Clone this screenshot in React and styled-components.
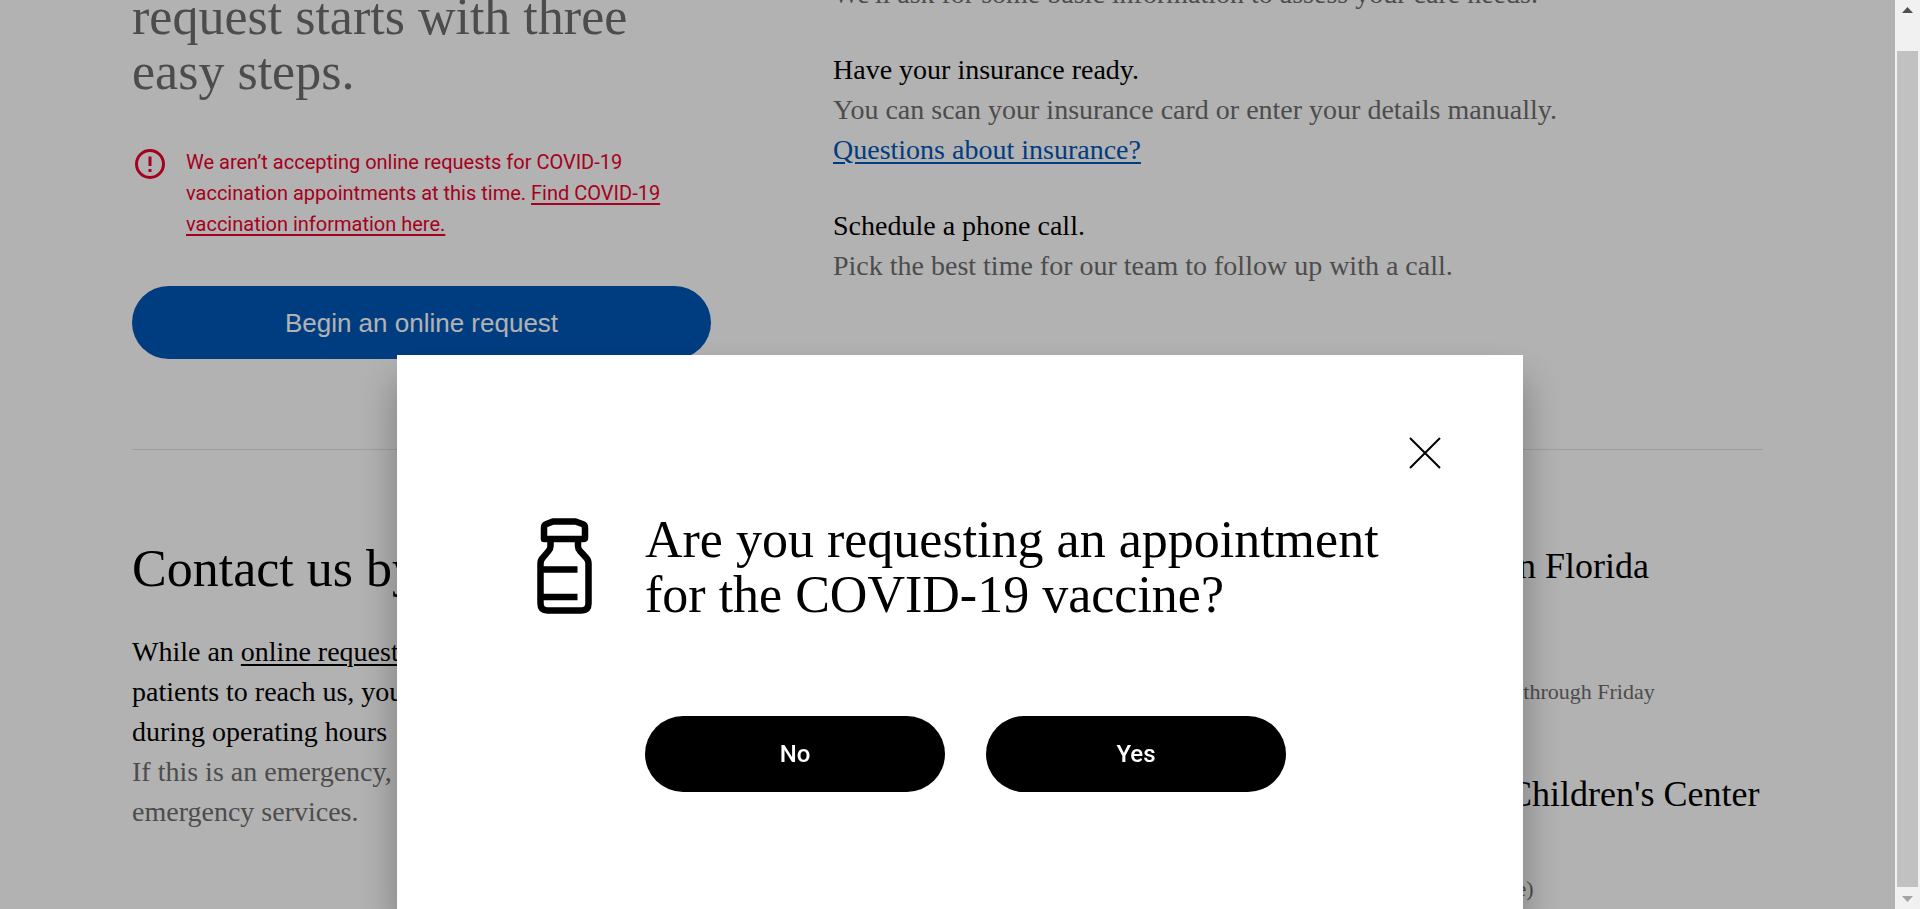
import React from "react";
import styled, { createGlobalStyle } from "styled-components";

const GlobalStyle = createGlobalStyle`
  *, *::before, *::after { box-sizing: border-box; }
  body {
    margin: 0;
    background: #fff;
    color: #000;
    font-family: "Liberation Serif", "Times New Roman", serif;
    font-size: 28px;
    line-height: 40px;
    overflow: hidden;
  }
  h1, h2, h3, p { margin: 0; font-weight: 400; }
  button { font: inherit; border: 0; cursor: pointer; }
`;

const Viewport = styled.div`
  display: flex;
  height: 100vh;
  overflow: hidden;
`;

const Page = styled.main`
  flex: 1;
  min-width: 0;
  margin-top: -66px;
  padding: 0 132px;
`;

const Section = styled.section`
  display: grid;
  grid-template-columns: 579px minmax(0, 1fr);
  column-gap: 122px;
`;

const Intro = styled(Section)`
  padding-bottom: 90px;
  border-bottom: 1px solid #e3e3e3;
`;

const Contact = styled(Section)`
  padding-top: 91px;
`;

const Heading = styled.h2`
  font-size: 52px;
  line-height: 55px;
  color: ${(p) => (p.$muted ? "#6e6e6e" : "#000")};
`;

const Alert = styled.div`
  display: flex;
  gap: 18px;
  margin: 48px 0 46px;
  color: #f0002c;
  font-family: Roboto, "Liberation Sans", sans-serif;
  font-size: 20px;
  line-height: 31px;

  svg { flex: none; }
`;

const TextLink = styled.a`
  color: ${(p) => p.$color || "inherit"};
  text-decoration: underline;
  text-decoration-thickness: 2px;
  text-underline-offset: 3px;
`;

const BeginButton = styled.button`
  width: 100%;
  height: 73px;
  border-radius: 37px;
  background: #0057b8;
  color: #fff;
  font-family: "Liberation Sans", Arial, sans-serif;
  font-size: 26px;
`;

const Steps = styled.div`
  display: flex;
  flex-direction: column;
  gap: 36px;
`;

const Muted = styled.p`
  color: #6e6e6e;
`;

const ContactCopy = styled.div`
  margin-top: 36px;
  white-space: nowrap;
`;

const Locations = styled.div`
  display: grid;
  grid-template-columns: 1fr 1fr;
  gap: 62px 40px;
`;

const LocationName = styled.h3`
  margin-bottom: 23px;
  font-size: 36px;
  line-height: 50px;
  white-space: nowrap;
`;

const LocationDetail = styled(Muted)`
  font-size: 22px;
  line-height: 31px;
`;

const ScrollBar = styled.div`
  position: relative;
  z-index: 2;
  flex: none;
  width: 25px;
  display: flex;
  flex-direction: column;
  align-items: center;
  background: #f1f1f1;
`;

const ScrollArrow = styled.svg`
  flex: none;
  width: 25px;
  height: 22px;
`;

const ScrollThumb = styled.div`
  flex: 1;
  width: 21px;
  margin-top: 29px;
  background: #c1c1c1;
`;

const Overlay = styled.div`
  position: fixed;
  inset: 0;
  z-index: 1;
  display: flex;
  justify-content: center;
  padding-top: 355px;
  overflow: hidden;
  background: rgba(0, 0, 0, 0.3);
`;

const Dialog = styled.div`
  width: 1126px;
  max-width: 100%;
  padding: 74px 74px 0;
  display: flex;
  flex-direction: column;
  background: #fff;
  box-shadow: 0 24px 38px rgba(0, 0, 0, 0.32);
`;

const CloseButton = styled.button`
  align-self: flex-end;
  display: flex;
  padding: 8px;
  background: none;
`;

const DialogBody = styled.div`
  display: flex;
  gap: 52px;
  margin-top: 35px;
  padding-left: 66px;

  > svg { flex: none; margin-top: 6px; }
`;

const DialogTitle = styled(Heading)`
  white-space: nowrap;
`;

const DialogActions = styled.div`
  display: flex;
  gap: 41px;
  margin-top: 94px;
`;

const ChoiceButton = styled.button`
  width: 300px;
  height: 76px;
  border-radius: 38px;
  background: #000;
  color: #fff;
  font-family: Roboto, "Liberation Sans", sans-serif;
  font-size: 24px;
  font-weight: 500;
`;

const AlertIcon = () => (
  <svg width="36" height="36" viewBox="0 0 36 36" fill="none" stroke="currentColor" strokeWidth="3" aria-hidden="true">
    <circle cx="18" cy="17" r="13.5" />
    <path d="M18 9.500v9.500M18 22v3" />
  </svg>
);

const VialIcon = () => (
  <svg width="56" height="96" viewBox="0 0 56 96" fill="none" stroke="#000" strokeWidth="6.5" strokeLinejoin="round" aria-hidden="true">
    <path d="M7 21V9.5Q7 7 9.500 6L16 3.500H38.500L45.500 6Q48 7 48 9.500V19.500Q48 21 46.500 21H8.500Q7 21 7 19.500Z" />
    <path d="M13.500 23V28Q13.500 31 11.500 33L6 39.500Q3.500 42 3.500 45.500V85.500Q3.500 92.500 10.500 92.500H44.500Q51.500 92.500 51.500 85.500V45.500Q51.500 42 49 39.500L43 33Q41 31 41 28V23" />
    <path d="M4 51.500H40.500M4 79H40.500" />
  </svg>
);

const CloseIcon = () => (
  <svg width="32" height="32" viewBox="0 0 32 32" stroke="#000" strokeWidth="2" aria-hidden="true">
    <path d="M1 1L31 31M31 1L1 31" />
  </svg>
);

const locations = [
  { name: "Mayo Clinic in Arizona", details: ["Phone", "Toll-free", "8 a.m.–5 p.m. Monday through Friday"] },
  { name: "Mayo Clinic in Florida", details: ["Phone", "Toll-free", "8 a.m.–5 p.m. Monday through Friday"] },
  { name: "Mayo Clinic in Minnesota", details: ["Phone", "Toll-free"] },
  { name: "Mayo Clinic Children's Center", details: ["Phone", "800-555-0100 (toll-free)"] },
];

export default function App() {
  return (
    <>
      <GlobalStyle />
      <Viewport>
        <Page>
          <Intro>
            <div>
              <Heading as="h1" $muted>
                Your appointment
                <br />
                request starts with three
                <br />
                easy steps.
              </Heading>
              <Alert role="note">
                <AlertIcon />
                <p>
                  We aren’t accepting online requests for COVID-19
                  <br />
                  vaccination appointments at this time.{" "}
                  <TextLink href="#covid">
                    Find COVID-19
                    <br />
                    vaccination information here.
                  </TextLink>
                </p>
              </Alert>
              <BeginButton type="button">Begin an online request</BeginButton>
            </div>
            <Steps>
              <div>
                <p>Tell us about yourself.</p>
                <Muted>We'll ask for some basic information to assess your care needs.</Muted>
              </div>
              <div>
                <p>Have your insurance ready.</p>
                <Muted>You can scan your insurance card or enter your details manually.</Muted>
                <TextLink href="#insurance" $color="#0057b8">Questions about insurance?</TextLink>
              </div>
              <div>
                <p>Schedule a phone call.</p>
                <Muted>Pick the best time for our team to follow up with a call.</Muted>
              </div>
            </Steps>
          </Intro>
          <Contact>
            <div>
              <Heading>Contact us by phone.</Heading>
              <ContactCopy>
                <p>
                  While an <TextLink href="#request">online request</TextLink> is the easiest way for
                  <br />
                  patients to reach us, you can also call
                  <br />
                  during operating hours
                </p>
                <Muted>
                  If this is an emergency, call 911 or
                  <br />
                  emergency services.
                </Muted>
              </ContactCopy>
            </div>
            <Locations>
              {locations.map((l) => (
                <div key={l.name}>
                  <LocationName>{l.name}</LocationName>
                  {l.details.map((d) => (
                    <LocationDetail key={d}>{d}</LocationDetail>
                  ))}
                </div>
              ))}
            </Locations>
          </Contact>
        </Page>
        <ScrollBar aria-hidden="true">
          <ScrollArrow viewBox="0 0 25 22">
            <path d="M7 13L12.500 7L18 13Z" fill="#505050" />
          </ScrollArrow>
          <ScrollThumb />
          <ScrollArrow viewBox="0 0 25 22">
            <path d="M7 9L12.500 15L18 9Z" fill="#a3a3a3" />
          </ScrollArrow>
        </ScrollBar>
      </Viewport>
      <Overlay>
        <Dialog role="dialog" aria-modal="true" aria-labelledby="dialog-title">
          <CloseButton type="button" aria-label="Close">
            <CloseIcon />
          </CloseButton>
          <DialogBody>
            <VialIcon />
            <div>
              <DialogTitle id="dialog-title">
                Are you requesting an appointment
                <br />
                for the COVID-19 vaccine?
              </DialogTitle>
              <DialogActions>
                <ChoiceButton type="button">No</ChoiceButton>
                <ChoiceButton type="button">Yes</ChoiceButton>
              </DialogActions>
            </div>
          </DialogBody>
        </Dialog>
      </Overlay>
    </>
  );
}
